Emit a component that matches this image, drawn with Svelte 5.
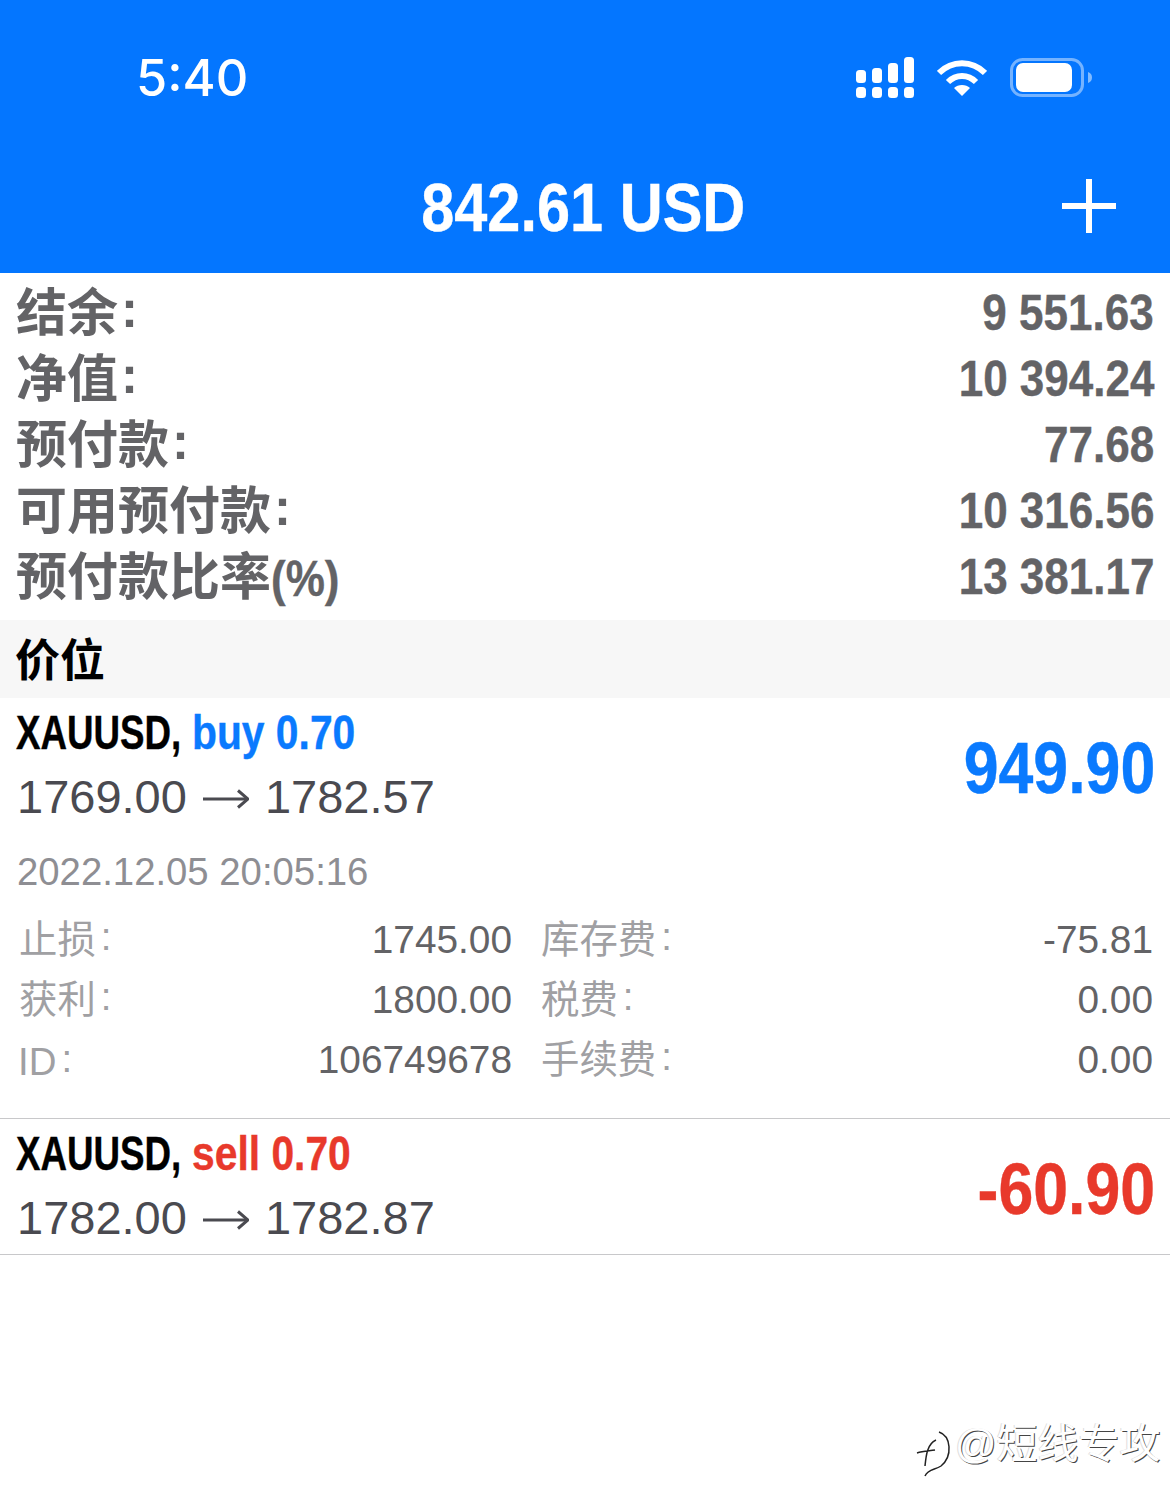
<script>
  const summary = [
    ['结余', ':', '9 551.63'],
    ['净值', ':', '10 394.24'],
    ['预付款', ':', '77.68'],
    ['可用预付款', ':', '10 316.56'],
    ['预付款比率', '(%)', '13 381.17']
  ];

  const details = [
    ['止损', '1745.00', '库存费', '-75.81'],
    ['获利', '1800.00', '税费', '0.00'],
    ['ID', '106749678', '手续费', '0.00']
  ];
</script>

{#snippet prices(from, to)}
  <div class="prices">
    <span>{from}</span>
    <svg width="46" height="20" viewBox="0 0 46 20" fill="none" stroke="#4a4a50" stroke-width="3">
      <path d="M0 10 H44" />
      <path d="M35 1.500 L45 10 L35 18.500" />
    </svg>
    <span>{to}</span>
  </div>
{/snippet}

<div class="page">
  <header>
    <div class="status">
      <span class="time">5:40</span>
      <div class="status-icons">
        <svg width="60" height="42" viewBox="0 0 60 42" fill="#fff">
          <rect x="0" y="13" width="10" height="13" rx="3.5" />
          <rect x="16" y="11" width="10" height="15" rx="3.5" />
          <rect x="32" y="6" width="10" height="20" rx="3.5" />
          <rect x="48" y="0" width="10" height="26" rx="3.5" />
          <rect x="0" y="30" width="10" height="11" rx="3.5" />
          <rect x="16" y="30" width="10" height="11" rx="3.5" />
          <rect x="32" y="30" width="10" height="11" rx="3.5" />
          <rect x="48" y="30" width="10" height="11" rx="3.5" />
        </svg>
        <svg width="50" height="37" viewBox="0 0 50 37" fill="none" stroke="#fff" stroke-width="6">
          <path d="M2 14 C15 1 35 1 48 14" />
          <path d="M11 23 C19 15 31 15 39 23" />
          <path d="M25 37 L17 29 C21 25 29 25 33 29 Z" fill="#fff" stroke="none" />
        </svg>
        <svg width="84" height="40" viewBox="0 0 84 40">
          <rect x="1.5" y="1.5" width="71" height="36" rx="11" fill="none" stroke="#fff" stroke-opacity="0.45" stroke-width="3" />
          <rect x="6" y="5" width="56" height="29" rx="7" fill="#fff" />
          <path d="M78 14 C81 15 82 17 82 19.500 C82 22 81 24 78 25 Z" fill="#fff" fill-opacity="0.5" />
        </svg>
      </div>
    </div>
    <div class="title-row">
      <span class="title"><span class="narrow center">842.61 USD</span></span>
      <span class="plus"></span>
    </div>
  </header>

  <section class="summary">
    {#each summary as [label, suffix, value]}
      <div class="summary-row">
        <span class="summary-label">{label}{#if suffix === ':'}<span class="colon">:</span>{:else}<span class="narrow suffix">{suffix}</span>{/if}</span>
        <span class="narrow right">{value}</span>
      </div>
    {/each}
  </section>

  <div class="band">价位</div>

  <div class="position open">
    <div class="pos-head">
      <div>
        <div class="symbol">
          <span class="narrow name">XAUUSD,</span>
          <span class="narrow side buy">buy 0.70</span>
        </div>
        {@render prices('1769.00', '1782.57')}
      </div>
      <span class="profit buy"><span class="narrow right">949.90</span></span>
    </div>
    <div class="date">2022.12.05 20:05:16</div>
    <div class="details">
      {#each details as [a, b, c, d]}
        <span class="d-label" class:latin={a === 'ID'}>{a}<span class="d-colon">:</span></span>
        <span class="d-value">{b}</span>
        <span class="d-label second">{c}<span class="d-colon">:</span></span>
        <span class="d-value">{d}</span>
      {/each}
    </div>
  </div>

  <div class="position">
    <div class="pos-head">
      <div>
        <div class="symbol">
          <span class="narrow name">XAUUSD,</span>
          <span class="narrow side sell">sell 0.70</span>
        </div>
        {@render prices('1782.00', '1782.87')}
      </div>
      <span class="profit sell"><span class="narrow right">-60.90</span></span>
    </div>
  </div>

  <div class="watermark">
    <svg width="38" height="50" viewBox="0 0 38 50" fill="none" stroke="#222" stroke-width="1.500">
      <path d="M2 25 C8 23 14 23 20 22 M10 38 C11 28 12 16 21 12" />
      <path d="M24 4 C36 8 38 28 26 38 C20 42 13 41 10 48" />
    </svg>
    <span>@短线专攻</span>
  </div>
</div>

<style>
  :global(body) {
    margin: 0;
    background: #fff;
  }

  .page {
    position: relative;
    width: 1170px;
    height: 1512px;
    overflow: hidden;
    font-family: "Liberation Sans", "Noto Sans CJK SC", sans-serif;
  }

  header {
    height: 273px;
    background: #0476ff;
    color: #fff;
  }

  .status {
    display: flex;
    justify-content: space-between;
    align-items: flex-start;
    height: 142px;
    padding: 0 76px 0 136px;
  }

  .time {
    margin-top: 48px;
    font-family: Inter, sans-serif;
    font-weight: 500;
    font-size: 50.5px;
    line-height: 60px;
  }

  .status-icons {
    display: flex;
    align-items: flex-start;
    gap: 21px;
    margin-top: 57px;
  }

  .status-icons svg:nth-child(2) {
    margin-top: 2px;
  }

  .status-icons svg:nth-child(3) {
    margin-top: 1px;
    margin-left: 2px;
  }

  .title-row {
    position: relative;
  }

  .title {
    display: block;
    font-weight: 700;
    font-size: 68px;
    line-height: 130px;
    text-align: center;
    padding-right: 4px;
  }

  .narrow {
    display: inline-block;
    transform: scaleX(0.88);
    transform-origin: left center;
    white-space: pre;
    -webkit-text-stroke: 0.4px currentColor;
  }

  .narrow.right {
    transform-origin: right center;
  }

  .narrow.center {
    transform: scaleX(0.875);
    transform-origin: center;
  }

  .plus {
    position: absolute;
    right: 54px;
    top: 37px;
    width: 54px;
    height: 54px;
    background:
      linear-gradient(#fff, #fff) center / 6px 54px no-repeat,
      linear-gradient(#fff, #fff) center / 54px 6px no-repeat;
  }

  .summary {
    padding: 7px 16px 10px 16px;
    color: #636366;
    font-weight: 700;
    font-size: 50px;
  }

  .summary-row {
    display: flex;
    justify-content: space-between;
    align-items: center;
    height: 66px;
  }

  .summary-label {
    font-size: 51px;
    margin-bottom: 8px;
    white-space: pre;
  }

  .colon {
    display: inline-block;
    margin-left: 3px;
    vertical-align: 4px;
  }

  .suffix {
    font-size: 50px;
    width: 66px;
    vertical-align: -1px;
  }

  .band {
    box-sizing: border-box;
    height: 78px;
    line-height: 78px;
    padding: 3px 0 0 15px;
    background: #f7f7f7;
    font-weight: 700;
    font-size: 45px;
    color: #000;
  }

  .position {
    padding: 1px 15px 0 16px;
    border-bottom: 1px solid #c8c8ca;
    height: 134px;
  }

  .position.open {
    height: 419px;
  }

  .pos-head {
    display: flex;
    justify-content: space-between;
    align-items: center;
    height: 134px;
  }

  .symbol {
    display: flex;
    font-weight: 700;
    font-size: 48px;
    line-height: 62px;
    margin-top: -2px;
    margin-bottom: 2px;
    color: #000;
  }

  .name {
    width: 176px;
    transform: scaleX(0.765);
  }

  .side {
    transform: scaleX(0.85);
  }

  .buy {
    color: #0a7afe;
  }

  .sell {
    color: #e8392b;
  }

  .prices {
    display: flex;
    align-items: center;
    gap: 16px;
    font-size: 47px;
    line-height: 62px;
    color: #4a4a50;
    padding-left: 1px;
  }

  .prices svg {
    margin-top: 3px;
  }

  .profit {
    font-weight: 700;
    font-size: 72px;
    line-height: 80px;
    margin-top: 4px;
  }

  .profit .narrow {
    transform: scaleX(0.87);
  }

  .date {
    margin-top: 9px;
    padding-left: 1px;
    font-size: 38.3px;
    line-height: 60px;
    color: #8e8e93;
  }

  .details {
    display: grid;
    grid-template-columns: 240px 253px 300px 1fr;
    grid-auto-rows: 60px;
    margin-top: 4px;
    padding: 0 2px 0 3px;
    font-size: 38.8px;
    align-items: center;
  }

  .d-label {
    font-size: 38.4px;
    color: #a0a0a3;
  }

  .d-label.latin {
    padding-top: 8px;
    margin-left: -1px;
  }

  .d-label.second {
    padding-left: 29px;
  }

  .d-colon {
    display: inline-block;
    margin-left: 5px;
    vertical-align: 3px;
  }

  .d-value {
    padding-top: 8px;
    text-align: right;
    color: #636366;
  }

  .watermark {
    position: absolute;
    left: 915px;
    top: 1418px;
    display: flex;
    align-items: flex-start;
    gap: 2px;
    font-size: 41px;
    color: #fff;
    white-space: nowrap;
    text-shadow: 1px 1px 0 #444, -1px 0 0 #ddd;
  }

  .watermark svg {
    margin-top: 10px;
  }

  .watermark span {
    line-height: 52px;
  }
</style>
